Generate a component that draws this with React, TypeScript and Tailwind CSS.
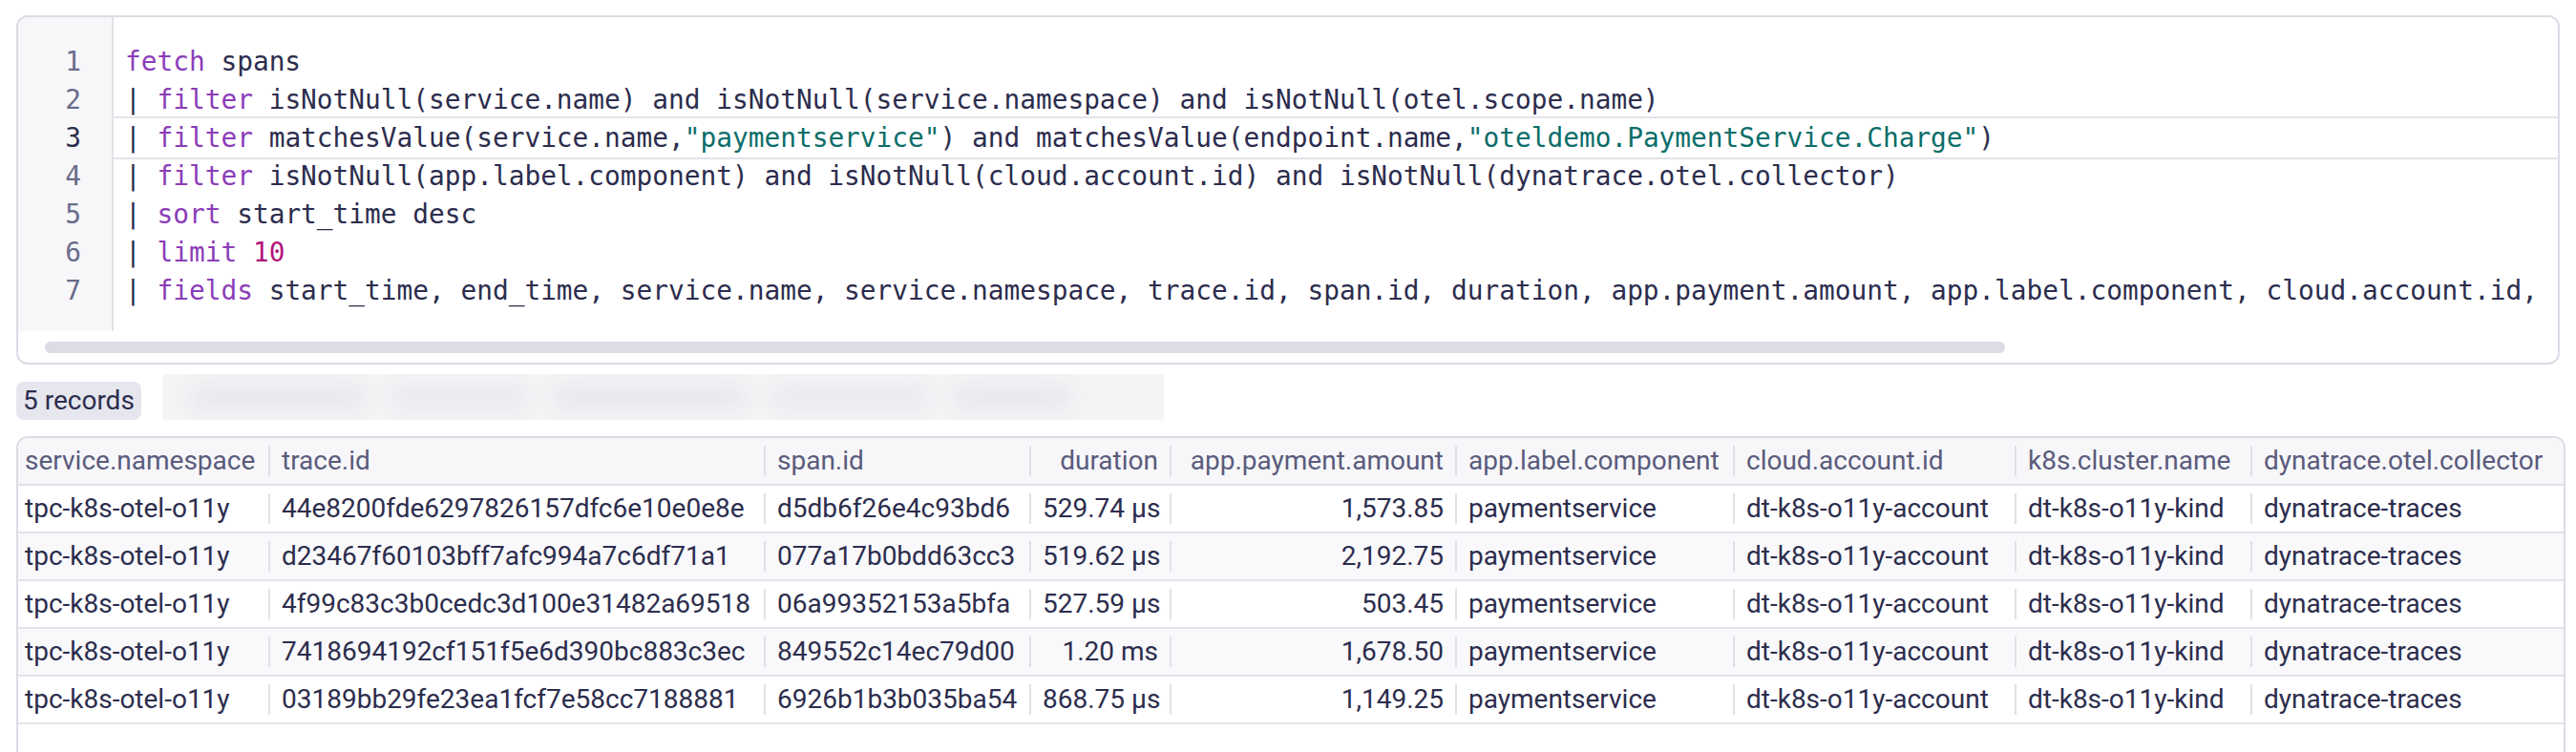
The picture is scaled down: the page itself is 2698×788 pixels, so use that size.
import React from "react";

type Tok = { t: string; c?: "k" | "n" | "s" };

const lines: Tok[][] = [
  [{ t: "fetch", c: "k" }, { t: " spans" }],
  [
    { t: "| " },
    { t: "filter", c: "k" },
    { t: " isNotNull(service.name) and isNotNull(service.namespace) and isNotNull(otel.scope.name)" },
  ],
  [
    { t: "| " },
    { t: "filter", c: "k" },
    { t: " matchesValue(service.name," },
    { t: '"paymentservice"', c: "s" },
    { t: ") and matchesValue(endpoint.name," },
    { t: '"oteldemo.PaymentService.Charge"', c: "s" },
    { t: ")" },
  ],
  [
    { t: "| " },
    { t: "filter", c: "k" },
    { t: " isNotNull(app.label.component) and isNotNull(cloud.account.id) and isNotNull(dynatrace.otel.collector)" },
  ],
  [{ t: "| " }, { t: "sort", c: "k" }, { t: " start_time desc" }],
  [{ t: "| " }, { t: "limit", c: "k" }, { t: " " }, { t: "10", c: "n" }],
  [
    { t: "| " },
    { t: "fields", c: "k" },
    {
      t: " start_time, end_time, service.name, service.namespace, trace.id, span.id, duration, app.payment.amount, app.label.component, cloud.account.id,",
    },
  ],
];

const tokClass = (c?: string) =>
  c === "k" ? "text-[#8b3db8]" : c === "n" ? "text-[#b4137c]" : c === "s" ? "text-[#0b6d69]" : "";

const headers = [
  "service.namespace",
  "trace.id",
  "span.id",
  "duration",
  "app.payment.amount",
  "app.label.component",
  "cloud.account.id",
  "k8s.cluster.name",
  "dynatrace.otel.collector",
];

const rightCols = [3, 4];

const rows = [
  ["tpc-k8s-otel-o11y", "44e8200fde6297826157dfc6e10e0e8e", "d5db6f26e4c93bd6", "529.74 µs", "1,573.85", "paymentservice", "dt-k8s-o11y-account", "dt-k8s-o11y-kind", "dynatrace-traces"],
  ["tpc-k8s-otel-o11y", "d23467f60103bff7afc994a7c6df71a1", "077a17b0bdd63cc3", "519.62 µs", "2,192.75", "paymentservice", "dt-k8s-o11y-account", "dt-k8s-o11y-kind", "dynatrace-traces"],
  ["tpc-k8s-otel-o11y", "4f99c83c3b0cedc3d100e31482a69518", "06a99352153a5bfa", "527.59 µs", "503.45", "paymentservice", "dt-k8s-o11y-account", "dt-k8s-o11y-kind", "dynatrace-traces"],
  ["tpc-k8s-otel-o11y", "7418694192cf151f5e6d390bc883c3ec", "849552c14ec79d00", "1.20 ms", "1,678.50", "paymentservice", "dt-k8s-o11y-account", "dt-k8s-o11y-kind", "dynatrace-traces"],
  ["tpc-k8s-otel-o11y", "03189bb29fe23ea1fcf7e58cc7188881", "6926b1b3b035ba54", "868.75 µs", "1,149.25", "paymentservice", "dt-k8s-o11y-account", "dt-k8s-o11y-kind", "dynatrace-traces"],
];

const gridCols = "grid grid-cols-[262px_519px_278px_147px_299px_291px_295px_247px_1fr]";

function Cell({ i, text }: { i: number; text: string }) {
  const right = rightCols.includes(i);
  return (
    <div className="flex h-full min-w-0 items-center">
      {i > 0 && <span className="h-[32px] w-[2px] shrink-0 bg-[#e0e0e8]" />}
      <span
        className={
          "flex-1 overflow-hidden whitespace-nowrap " +
          (i === 0 ? "pl-[7px] " : "pl-[12px] ") +
          (right ? "pr-[12px] text-right " : "")
        }
      >
        {text}
      </span>
    </div>
  );
}

export default function App() {
  return (
    <div className="flex h-screen flex-col overflow-hidden bg-white pl-[17px] pr-[11px] pt-[16px] font-['Roboto','Liberation_Sans',sans-serif] text-[#2c2d4d]">
      {/* Editor */}
      <div className="mr-[6px] flex h-[366px] shrink-0 flex-col overflow-hidden rounded-[12px] border-2 border-[#dcdce6]">
        <div className="flex h-[329px] shrink-0">
          <div className="flex w-[100px] shrink-0 flex-col items-end border-r-2 border-[#e2e2ea] bg-[#f7f7f9] pr-[32px] pt-[27px] font-['DejaVu_Sans_Mono',monospace] text-[27.8px] leading-[40px] text-[#6a6b8a]">
            {lines.map((_, i) => (
              <div key={i} className={i === 2 ? "text-[#2c2d4d]" : ""}>
                {i + 1}
              </div>
            ))}
          </div>
          <div className="min-w-0 flex-1 overflow-hidden pt-[27px] font-['DejaVu_Sans_Mono',monospace] text-[27.8px] leading-[40px] text-[#2c2d4d]">
            {lines.map((l, i) => (
              <div key={i} className="relative h-[40px] whitespace-pre pl-[12px]">
                {i === 2 && (
                  <div className="absolute inset-x-0 -top-[3px] -bottom-[2px] border-y-2 border-[#e3e3eb]" />
                )}
                <span className="relative">
                  {l.map((t, j) => (
                    <span key={j} className={tokClass(t.c)}>
                      {t.t}
                    </span>
                  ))}
                </span>
              </div>
            ))}
          </div>
        </div>
        <div className="h-[33px] shrink-0 pt-[11px] pl-[28px]">
          <div className="h-[12px] w-[2053px] rounded-full bg-[#dcdce6]" />
        </div>
      </div>

      {/* Records row */}
      <div className="mt-[10px] flex h-[48px] shrink-0 items-end gap-[22px]">
        <div className="flex h-[40px] w-[131px] items-center rounded-[8px] bg-[#e6e6ee] pl-[7px] text-[28px] text-[#2c2d4d]">
          5 records
        </div>
        <div className="relative h-[48px] w-[1049px] overflow-hidden rounded-[4px] bg-[#f4f4f6]">
          <div className="flex h-full items-center gap-[30px] px-[30px] blur-[10px]">
            <div className="h-[20px] w-[180px] rounded bg-[#e6e6ec]" />
            <div className="h-[20px] w-[140px] rounded bg-[#e8e8ee]" />
            <div className="h-[20px] w-[200px] rounded bg-[#e6e6ec]" />
            <div className="h-[20px] w-[160px] rounded bg-[#e8e8ee]" />
            <div className="h-[20px] w-[120px] rounded bg-[#e6e6ec]" />
          </div>
        </div>
      </div>

      {/* Table */}
      <div className="mt-[17px] flex min-h-0 flex-1 flex-col overflow-hidden rounded-t-[12px] border-2 border-b-0 border-[#dcdce6] text-[28px]">
        <div className={gridCols + " h-[50px] shrink-0 border-b-2 border-[#e0e0e8] bg-[#f7f7f9] text-[#5a5b7c]"}>
          {headers.map((h, i) => (
            <Cell key={i} i={i} text={h} />
          ))}
        </div>
        {rows.map((r, ri) => (
          <div
            key={ri}
            className={
              gridCols +
              " h-[50px] shrink-0 border-b-2 border-[#e4e4ec] " +
              (ri % 2 === 1 ? "bg-[#f9f9fb]" : "bg-white")
            }
          >
            {r.map((v, i) => (
              <Cell key={i} i={i} text={v} />
            ))}
          </div>
        ))}
        <div className="flex-1 bg-white" />
      </div>
    </div>
  );
}
